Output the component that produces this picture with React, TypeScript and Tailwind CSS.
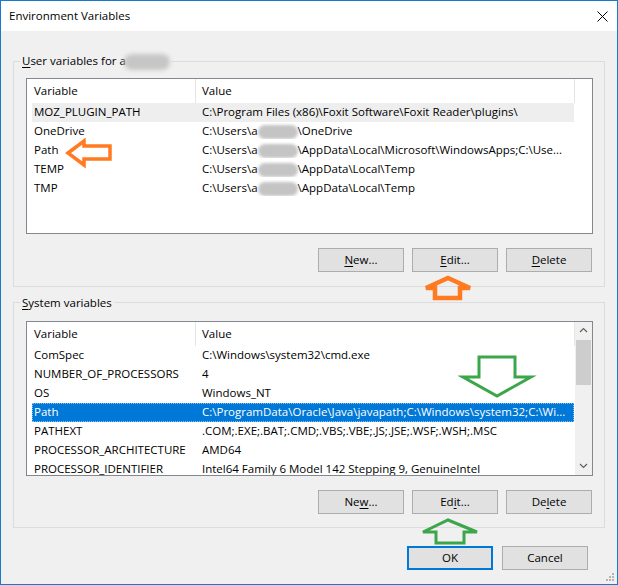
import type { ReactNode } from "react";

type Row = { name: string; value: ReactNode; state?: "hover" | "selected" };

function Smudge() {
  return <span className="inline-block h-[14px] w-[40px] rounded-full bg-[#c4c4c4] align-middle blur-[1.5px]" />;
}

function user(rest: string) {
  return (
    <>
      {"C:\\Users\\a"}
      <Smudge />
      {rest}
    </>
  );
}

const USER_ROWS: Row[] = [
  { name: "MOZ_PLUGIN_PATH", value: "C:\\Program Files (x86)\\Foxit Software\\Foxit Reader\\plugins\\", state: "hover" },
  { name: "OneDrive", value: user("\\OneDrive") },
  { name: "Path", value: user("\\AppData\\Local\\Microsoft\\WindowsApps;C:\\Use...") },
  { name: "TEMP", value: user("\\AppData\\Local\\Temp") },
  { name: "TMP", value: user("\\AppData\\Local\\Temp") },
];

const SYSTEM_ROWS: Row[] = [
  { name: "ComSpec", value: "C:\\Windows\\system32\\cmd.exe" },
  { name: "NUMBER_OF_PROCESSORS", value: "4" },
  { name: "OS", value: "Windows_NT" },
  { name: "Path", value: "C:\\ProgramData\\Oracle\\Java\\javapath;C:\\Windows\\system32;C:\\Wi...", state: "selected" },
  { name: "PATHEXT", value: ".COM;.EXE;.BAT;.CMD;.VBS;.VBE;.JS;.JSE;.WSF;.WSH;.MSC" },
  { name: "PROCESSOR_ARCHITECTURE", value: "AMD64" },
  { name: "PROCESSOR_IDENTIFIER", value: "Intel64 Family 6 Model 142 Stepping 9, GenuineIntel" },
];

function Chevron({ up }: { up?: boolean }) {
  return (
    <svg width="9" height="6" viewBox="0 0 9 6" className="block">
      <path d={up ? "M1 5 L4.5 1.5 L8 5" : "M1 1 L4.5 4.5 L8 1"} fill="none" stroke="#606060" strokeWidth="1.2" />
    </svg>
  );
}

function ScrollBar() {
  return (
    <div className="flex w-[17px] flex-col bg-[#f0f0f0]">
      <div className="flex h-[17px] items-center justify-center">
        <Chevron up />
      </div>
      <div className="flex-1 px-[1px] pt-[1px]">
        <div className="h-[45px] bg-[#cdcdcd]" />
      </div>
      <div className="flex h-[17px] items-center justify-center">
        <Chevron />
      </div>
    </div>
  );
}

function ListBox({ rows, tall, scroll }: { rows: Row[]; tall?: boolean; scroll?: boolean }) {
  return (
    <div className={`flex overflow-hidden border border-[#828790] bg-white ${tall ? "h-[156px]" : "h-[155px]"}`}>
      <div className="w-[548px] overflow-hidden">
        <div className="flex h-[24px] items-center">
          <div className="flex h-full w-[169px] items-center border-r border-[#e5e5e5] pl-[7px]">Variable</div>
          <div className="flex h-full w-[379px] items-center border-r border-[#e5e5e5] pl-[6px]">Value</div>
        </div>
        {rows.map((r) => (
          <div
            key={r.name}
            className={`ml-[5px] flex h-[19px] w-[542px] items-center whitespace-nowrap ${
              r.state === "selected"
                ? "bg-[#0078d7] text-white outline outline-1 -outline-offset-1 outline-dotted outline-[#8cc1ee]"
                : r.state === "hover"
                  ? "bg-[#eeeeee]"
                  : ""
            }`}
          >
            <div className="w-[168px] shrink-0 pl-[2px]">{r.name}</div>
            <div className="min-w-0 flex-1 overflow-hidden pl-[2px]">{r.value}</div>
          </div>
        ))}
      </div>
      {scroll && <ScrollBar />}
    </div>
  );
}

function Btn({ children, primary }: { children: ReactNode; primary?: boolean }) {
  return (
    <div
      className={`flex h-[24px] w-[86px] items-center justify-center bg-[#e1e1e1] ${
        primary ? "border-2 border-[#0078d7]" : "border border-[#adadad]"
      }`}
    >
      {children}
    </div>
  );
}

function U({ children }: { children: ReactNode }) {
  return <span className="underline underline-offset-[2px]">{children}</span>;
}

export default function App() {
  return (
    <div className="relative flex h-[585px] w-[618px] flex-col border border-[#1979ca] bg-[#f0f0f0] font-['Open_Sans','Noto_Sans',sans-serif] text-[11.5px] leading-[16px] text-black">
      <div className="flex h-[30px] items-center bg-white pl-[8px]">
        <span>Environment Variables</span>
        <svg width="11" height="11" viewBox="0 0 11 11" className="mr-[9px] ml-auto">
          <path d="M0.5 0.5 L10.5 10.5 M10.5 0.5 L0.5 10.5" stroke="#000" strokeWidth="1" />
        </svg>
      </div>

      <div className="flex flex-col px-[12px] pt-[22px]">
        <fieldset className="border border-[#dcdcdc]">
          <legend className="ml-[6px] px-[2px]">
            <U>U</U>ser variables for a
            <span className="-ml-[2px] inline-block h-[16px] w-[46px] rounded-full bg-[#c6c6c6] align-middle blur-[2px]" />
          </legend>
          <div className="pr-[11px] pb-[14px] pl-[12px]">
            <div className="mt-[8px]">
              <ListBox rows={USER_ROWS} tall />
            </div>
            <div className="mt-[14px] mr-[1px] flex justify-end gap-[8px]">
              <Btn>
                <U>N</U>ew...
              </Btn>
              <Btn>
                <U>E</U>dit...
              </Btn>
              <Btn>
                <U>D</U>elete
              </Btn>
            </div>
          </div>
        </fieldset>

        <fieldset className="mt-[8px] border border-[#dcdcdc]">
          <legend className="ml-[6px] px-[2px]">
            <U>S</U>ystem variables
          </legend>
          <div className="pr-[11px] pb-[13px] pl-[12px]">
            <div className="mt-[10px]">
              <ListBox rows={SYSTEM_ROWS} scroll />
            </div>
            <div className="mt-[14px] mr-[1px] flex justify-end gap-[8px]">
              <Btn>
                Ne<U>w</U>...
              </Btn>
              <Btn>
                Ed<U>i</U>t...
              </Btn>
              <Btn>
                De<U>l</U>ete
              </Btn>
            </div>
          </div>
        </fieldset>

        <div className="mt-[18px] mr-[17px] flex justify-end gap-[9px]">
          <Btn primary>OK</Btn>
          <Btn>Cancel</Btn>
        </div>
      </div>

      {/* annotation arrows drawn over the dialog, viewBox in page coordinates */}
      <svg className="absolute top-[137px] left-[64px]" width="50" height="32" viewBox="65 138 50 32">
        <polygon points="68,153 84,141 84,146 110,146 110,159 84,159 84,165" fill="none" stroke="#ff7a21" strokeWidth="3.5" strokeLinejoin="miter" />
      </svg>
      <svg className="absolute top-[272px] left-[420px]" width="56" height="31" viewBox="421 273 56 31">
        <polygon points="448,278 470,288 460,288 460,298 435,298 435,288 426,288" fill="none" stroke="#ff7a21" strokeWidth="4.5" />
      </svg>
      <svg className="absolute top-[351px] left-[457px]" width="80" height="50" viewBox="458 352 80 50">
        <polygon points="479,357 515,357 515,377 531,377 497,396 463,377 479,377" fill="none" stroke="#3ba64a" strokeWidth="3" />
      </svg>
      <svg className="absolute top-[514px] left-[417px]" width="66" height="34" viewBox="418 515 66 34">
        <polygon points="448,520 477,532 464,532 464,543 436,543 436,532 423,532" fill="none" stroke="#3ba64a" strokeWidth="3" />
      </svg>

      {/* size grip */}
      <svg className="absolute right-[2px] bottom-[2px]" width="9" height="9" viewBox="0 0 9 9">
        <g fill="#b5b5b5">
          <rect x="6" y="0" width="2" height="2" />
          <rect x="3" y="3" width="2" height="2" />
          <rect x="6" y="3" width="2" height="2" />
          <rect x="0" y="6" width="2" height="2" />
          <rect x="3" y="6" width="2" height="2" />
          <rect x="6" y="6" width="2" height="2" />
        </g>
      </svg>
    </div>
  );
}
